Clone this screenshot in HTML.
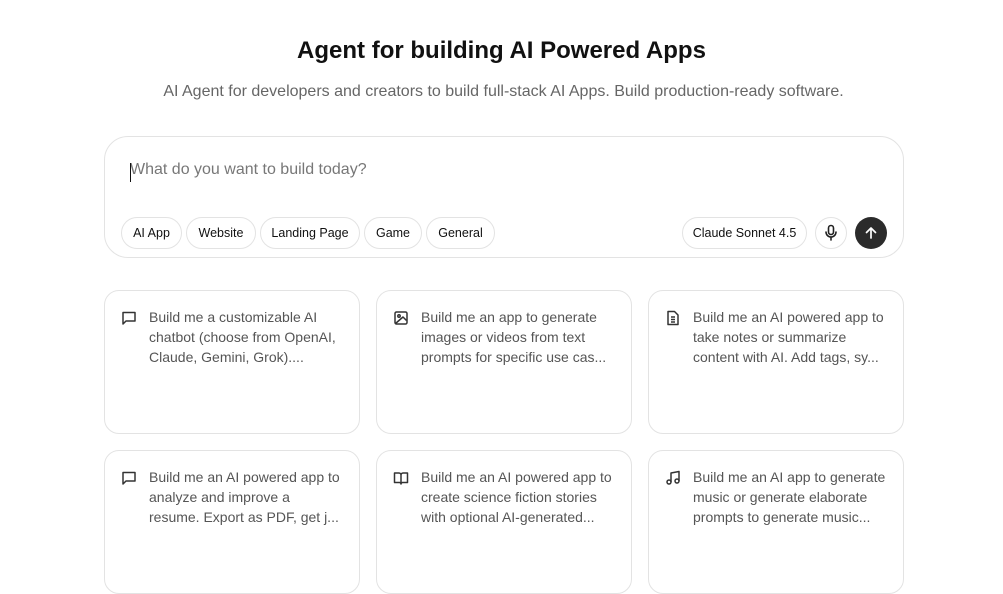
<!DOCTYPE html>
<html><head><meta charset="utf-8"><style>
*{box-sizing:border-box;margin:0;padding:0}
body{width:1003px;height:564px;overflow:hidden;background:#fff;font-family:"Liberation Sans",Arial,sans-serif;position:relative;color:#111}
h1{position:absolute;top:37px;left:0;width:1003px;text-align:center;font-size:24px;font-weight:bold;color:#111}
.sub{position:absolute;top:83px;left:2px;width:1003px;text-align:center;font-size:16px;color:#666}
.box{position:absolute;left:104px;top:136px;width:800px;height:122px;border:1px solid #e3e3e3;border-radius:24px}
.ph{position:absolute;left:25px;top:24px;font-size:16px;color:#777}
.ph:before{content:"";position:absolute;left:0;top:2px;width:1px;height:19px;background:#111}
.chip{position:absolute;top:80px;height:32px;border:1px solid #e3e3e3;border-radius:16px;font-size:12.5px;line-height:30px;text-align:center;color:#111}
.circ{position:absolute;top:80px;width:32px;height:32px;border-radius:16px}
.card{position:absolute;width:256px;height:144px;border:1px solid #e3e3e3;border-radius:15px}
.card svg{position:absolute;left:16px;top:19px}
.card p{position:absolute;left:44px;top:16px;width:205px;font-size:14px;line-height:20px;color:#555;white-space:nowrap;overflow:hidden}
</style></head><body>
<h1>Agent for building AI Powered Apps</h1>
<div class="sub">AI Agent for developers and creators to build full-stack AI Apps. Build production-ready software.</div>
<div class="box">
<div class="ph">What do you want to build today?</div>
<div class="chip" style="left:16px;width:61px">AI App</div>
<div class="chip" style="left:81px;width:70px">Website</div>
<div class="chip" style="left:155px;width:100px">Landing Page</div>
<div class="chip" style="left:259px;width:58px">Game</div>
<div class="chip" style="left:321px;width:69px">General</div>
<div class="chip" style="left:577px;width:125px">Claude Sonnet 4.5</div>
<div class="circ" style="left:710px;border:1px solid #e3e3e3"><svg width="30" height="30" viewBox="0 0 30 30" fill="none" stroke="#222" stroke-width="1.6" stroke-linecap="round"><rect x="12.5" y="7.5" width="5" height="9" rx="2.5"/><path d="M10 14a5 5 0 0 0 10 0M15 19v3"/></svg></div>
<div class="circ" style="left:750px;background:#2b2b2b"><svg width="32" height="32" viewBox="0 0 32 32" fill="none" stroke="#fff" stroke-width="1.7" stroke-linecap="round" stroke-linejoin="round"><path d="M16 21V11M11.5 15.5 16 11l4.5 4.5"/></svg></div>
</div>

<div class="card" style="left:104px;top:290px"><svg width="16" height="16" viewBox="0 0 16 16" fill="none" stroke="#333" stroke-width="1.5" stroke-linejoin="round"><path d="M2 2.5h12v8.5H5L2 14z"/></svg><p>Build me a customizable AI<br>chatbot (choose from OpenAI,<br>Claude, Gemini, Grok)....</p></div>
<div class="card" style="left:376px;top:290px"><svg width="16" height="16" viewBox="0 0 16 16" fill="none" stroke="#333" stroke-width="1.5" stroke-linejoin="round"><rect x="2" y="2" width="12" height="12" rx="1.5"/><circle cx="6" cy="6" r="1.2"/><path d="M2.5 13.5 10 7l3.5 3.5"/></svg><p>Build me an app to generate<br>images or videos from text<br>prompts for specific use cas...</p></div>
<div class="card" style="left:648px;top:290px"><svg width="16" height="16" viewBox="0 0 16 16" fill="none" stroke="#333" stroke-width="1.5" stroke-linejoin="round"><path d="M3 1.5h6.5L13 5v9.5H3z"/><path d="M6 7h4M6 9.5h4M6 12h4"/></svg><p>Build me an AI powered app to<br>take notes or summarize<br>content with AI. Add tags, sy...</p></div>
<div class="card" style="left:104px;top:450px"><svg width="16" height="16" viewBox="0 0 16 16" fill="none" stroke="#333" stroke-width="1.5" stroke-linejoin="round"><path d="M2 2.5h12v8.5H5L2 14z"/></svg><p>Build me an AI powered app to<br>analyze and improve a<br>resume. Export as PDF, get j...</p></div>
<div class="card" style="left:376px;top:450px"><svg width="16" height="16" viewBox="0 0 16 16" fill="none" stroke="#333" stroke-width="1.5" stroke-linejoin="round"><path d="M1.5 3h4.5A2 2 0 0 1 8 5v9a1.5 1.5 0 0 0-1.5-1.5h-5zM14.5 3H10a2 2 0 0 0-2 2v9a1.5 1.5 0 0 1 1.5-1.5h5z"/></svg><p>Build me an AI powered app to<br>create science fiction stories<br>with optional AI-generated...</p></div>
<div class="card" style="left:648px;top:450px"><svg width="16" height="16" viewBox="0 0 16 16" fill="none" stroke="#333" stroke-width="1.5" stroke-linejoin="round"><path d="M6 12V3l8-1.5V11"/><circle cx="4" cy="12" r="2"/><circle cx="12" cy="11" r="2"/></svg><p>Build me an AI app to generate<br>music or generate elaborate<br>prompts to generate music...</p></div>
</body></html>
